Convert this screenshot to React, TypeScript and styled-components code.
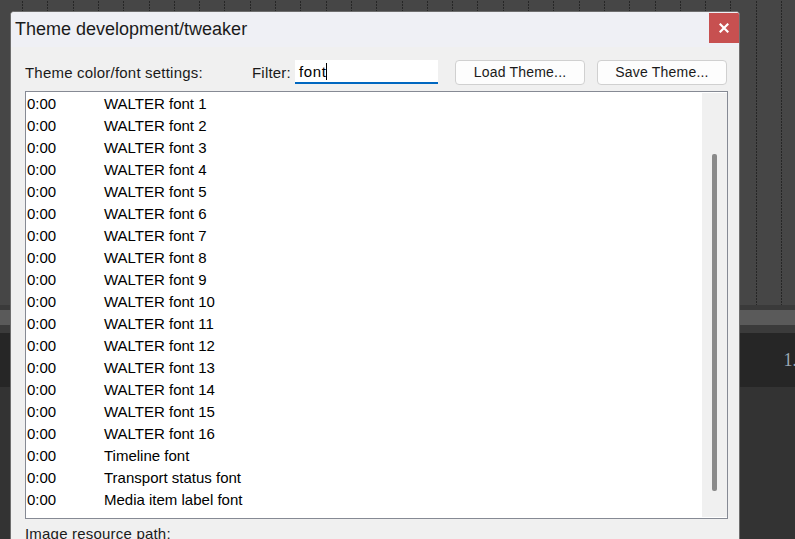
import React from "react";
import styled, { createGlobalStyle } from "styled-components";

const GlobalStyle = createGlobalStyle`
  html, body {
    margin: 0;
    padding: 0;
    width: 795px;
    height: 539px;
    overflow: hidden;
    background: #333333;
  }
  * {
    box-sizing: border-box;
  }
`;

const Desktop = styled.div`
  position: relative;
  width: 795px;
  height: 539px;
  overflow: hidden;
  display: flex;
  flex-direction: column;
  font-family: "Liberation Sans", Arial, sans-serif;
`;

const TrackArea = styled.div`
  height: 305px;
  background-color: #464646;
  background-image: repeating-linear-gradient(
      to bottom,
      #464646 0 1px,
      transparent 1px 3px
    ),
    repeating-linear-gradient(
      to right,
      transparent 0 22px,
      #262626 22px 23px,
      transparent 23px 25.3px
    );
`;

const Band = styled.div<{ $h: number; $bg: string }>`
  height: ${(p) => p.$h}px;
  background: ${(p) => p.$bg};
  display: flex;
  align-items: center;
  justify-content: flex-end;
`;

const Ruler = styled.span`
  font-family: "Liberation Serif", serif;
  font-size: 18px;
  color: #9aa6b2;
  margin-right: -2px;
`;

const Rest = styled.div`
  flex: 1;
  background: #333333;
`;

const Window = styled.div`
  position: absolute;
  left: 10px;
  top: 11px;
  width: 730px;
  height: 560px;
  background: #f0f0f0;
  border: 1px solid #6e6e6e;
  border-radius: 4px 4px 0 0;
  display: flex;
  flex-direction: column;
  overflow: hidden;
`;

const TitleBar = styled.div`
  height: 35px;
  background: #eff0f5;
  display: flex;
  align-items: center;
  justify-content: space-between;
  padding-left: 4px;
`;

const Title = styled.span`
  font-size: 18px;
  color: #1b1b1b;
  margin-top: -1px;
`;

const CloseButton = styled.div`
  width: 30px;
  height: 30px;
  align-self: flex-start;
  margin-top: 1px;
  background: #c75050;
  color: #ffffff;
  display: flex;
  align-items: center;
  justify-content: center;
`;

const Body = styled.div`
  padding: 12px 0 0 14px;
  display: flex;
  flex-direction: column;
`;

const Toolbar = styled.div`
  height: 26px;
  display: flex;
  align-items: center;
`;

const Label = styled.span<{ $w?: number }>`
  width: ${(p) => (p.$w ? `${p.$w}px` : "auto")};
  font-size: 15px;
  letter-spacing: 0.2px;
  color: #1a1a1a;
  white-space: nowrap;
`;

const FilterInput = styled.div`
  width: 143px;
  height: 24px;
  background: #ffffff;
  border-bottom: 2px solid #0067c0;
  display: flex;
  align-items: center;
  padding-left: 4px;
  font-size: 15px;
  letter-spacing: 0.6px;
  color: #000;
  margin-right: 17px;
`;

const Caret = styled.span`
  display: inline-block;
  width: 1px;
  height: 17px;
  background: #000;
`;

const Button = styled.div<{ $gap?: number }>`
  width: 130px;
  height: 25px;
  margin-right: ${(p) => p.$gap ?? 0}px;
  background: #fdfdfd;
  border: 1px solid #d0d0d0;
  border-radius: 4px;
  display: flex;
  align-items: center;
  justify-content: center;
  font-size: 14px;
  letter-spacing: 0.2px;
  color: #1a1a1a;
`;

const List = styled.div`
  margin-top: 6px;
  width: 703px;
  height: 428px;
  background: #ffffff;
  border: 1px solid #868a94;
  display: flex;
`;

const Rows = styled.div`
  flex: 1;
  padding: 0 0 0 1px;
`;

const Row = styled.div`
  height: 22px;
  display: flex;
  align-items: center;
  font-size: 15px;
  color: #000;
`;

const Time = styled.span`
  width: 77px;
`;

const ScrollTrack = styled.div`
  width: 25px;
  margin: 1px 0 1px 0;
  background: #f0f0f0;
  padding: 61px 0 0 10px;
`;

const ScrollThumb = styled.div`
  width: 5px;
  height: 337px;
  border-radius: 2px;
  background: #8a8a8a;
`;

const Footer = styled.div`
  margin-top: 6px;
  font-size: 15px;
  letter-spacing: 0.2px;
  color: #1a1a1a;
`;

const items = [
  ...Array.from({ length: 16 }, (_, i) => `WALTER font ${i + 1}`),
  "Timeline font",
  "Transport status font",
  "Media item label font",
];

export default function App() {
  return (
    <>
      <GlobalStyle />
      <Desktop>
        <TrackArea />
        <Band $h={5} $bg="#3a3a3a" />
        <Band $h={15} $bg="#5a5a5a" />
        <Band $h={8} $bg="#3b3b3b" />
        <Band $h={54} $bg="#262626">
          <Ruler>1.</Ruler>
        </Band>
        <Rest />
        <Window>
          <TitleBar>
            <Title>Theme development/tweaker</Title>
            <CloseButton>
              <svg width="10" height="10" viewBox="0 0 10 10">
                <path
                  d="M1.5 1.5 L8.5 8.5 M8.5 1.5 L1.5 8.5"
                  stroke="#ffffff"
                  strokeWidth="2.2"
                  strokeLinecap="square"
                />
              </svg>
            </CloseButton>
          </TitleBar>
          <Body>
            <Toolbar>
              <Label $w={227}>Theme color/font settings:</Label>
              <Label $w={43}>Filter:</Label>
              <FilterInput>
                font
                <Caret />
              </FilterInput>
              <Button $gap={12}>Load Theme...</Button>
              <Button>Save Theme...</Button>
            </Toolbar>
            <List>
              <Rows>
                {items.map((name) => (
                  <Row key={name}>
                    <Time>0:00</Time>
                    <span>{name}</span>
                  </Row>
                ))}
              </Rows>
              <ScrollTrack>
                <ScrollThumb />
              </ScrollTrack>
            </List>
            <Footer>Image resource path:</Footer>
          </Body>
        </Window>
      </Desktop>
    </>
  );
}
